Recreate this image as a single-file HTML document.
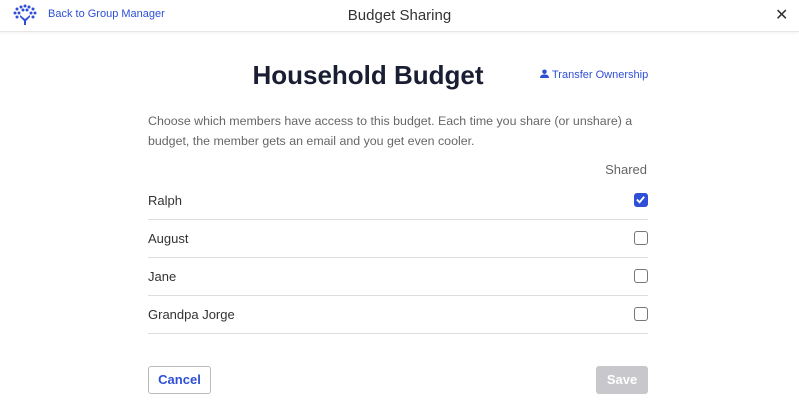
<!DOCTYPE html>
<html><head><style>
*{margin:0;padding:0;box-sizing:border-box}
body{width:799px;height:400px;background:#fff;font-family:"Liberation Sans",sans-serif;position:relative;overflow:hidden;color:#333}
.hdr{position:absolute;left:0;top:0;width:799px;height:32px;border-bottom:1px solid #e6e6e6;box-shadow:0 1px 3px rgba(0,0,0,.06)}
.back{position:absolute;left:48px;top:8px;font-size:11px;color:#2e4fd6}
.ttl{position:absolute;left:0;width:799px;text-align:center;top:7px;font-size:15px;color:#333}
.x{position:absolute;left:775px;top:5px;font-size:16px;color:#333}
h1{position:absolute;left:0;width:736px;text-align:center;top:60px;font-size:26px;font-weight:bold;color:#1a1e33}
.to{position:absolute;left:540px;top:69px;font-size:11px;color:#2e4fd6}
.desc{position:absolute;left:148px;top:111px;width:500px;font-size:12.4px;line-height:20px;color:#666}
.sh{position:absolute;right:152px;top:162px;font-size:13px;color:#666}
.row{position:absolute;left:148px;width:500px;height:38px;border-bottom:1px solid #ddd;font-size:13px;color:#333}
.row span{position:absolute;left:0;top:11px}
.cb{position:absolute;right:0;top:11px;width:14px;height:14px;border:1.5px solid #777;border-radius:3px}
.cb.on{background:#2e4fd6;border-color:#2e4fd6}
.btn{position:absolute;top:366px;height:28px;border-radius:3px;font-size:13px;font-weight:bold;text-align:center;line-height:26px}
</style></head><body>
<div class="hdr">
<svg style="position:absolute;left:13px;top:4px" width="24" height="22" viewBox="0 0 24 22" fill="#2e4fd6">
<circle cx="12" cy="2" r="1.5"/><circle cx="8" cy="3" r="1.5"/><circle cx="16" cy="3" r="1.5"/><circle cx="4" cy="5" r="1.5"/><circle cx="20" cy="5" r="1.5"/><circle cx="10" cy="6" r="1.5"/><circle cx="14" cy="6" r="1.5"/><circle cx="2" cy="9" r="1.5"/><circle cx="22" cy="9" r="1.5"/><circle cx="6" cy="9" r="1.5"/><circle cx="18" cy="9" r="1.5"/><circle cx="4" cy="13" r="1.5"/><circle cx="20" cy="13" r="1.5"/>
<path d="M7 11 L12 15 L17 11 L17 13 L13 17 L13 21 L11 21 L11 17 L7 13Z"/></svg>
<div class="back">Back to Group Manager</div>
<div class="ttl">Budget Sharing</div>
<div class="x">✕</div>
</div>
<h1>Household Budget</h1>
<div class="to"><svg width="9" height="9" viewBox="0 0 10 10" fill="#2e4fd6" style="margin-right:3px"><circle cx="5" cy="3" r="2.5"/><path d="M0 10 Q0 6 5 6 Q10 6 10 10Z"/></svg>Transfer Ownership</div>
<div class="desc">Choose which members have access to this budget. Each time you share (or unshare) a budget, the member gets an email and you get even cooler.</div>
<div class="sh">Shared</div>
<div class="row" style="top:182px"><span>Ralph</span><div class="cb on"><svg width="11" height="11" viewBox="0 0 12 12" style="position:absolute;left:0;top:0"><path d="M2 6 L5 9 L10 3" stroke="#fff" stroke-width="2" fill="none"/></svg></div></div>
<div class="row" style="top:220px"><span>August</span><div class="cb"></div></div>
<div class="row" style="top:258px"><span>Jane</span><div class="cb"></div></div>
<div class="row" style="top:296px"><span>Grandpa Jorge</span><div class="cb"></div></div>
<div class="btn" style="left:148px;width:63px;border:1px solid #bbb;color:#2e4fd6;background:#fff">Cancel</div>
<div class="btn" style="left:596px;width:52px;background:#c8c8cc;color:#fff;line-height:28px">Save</div>
</body></html>
